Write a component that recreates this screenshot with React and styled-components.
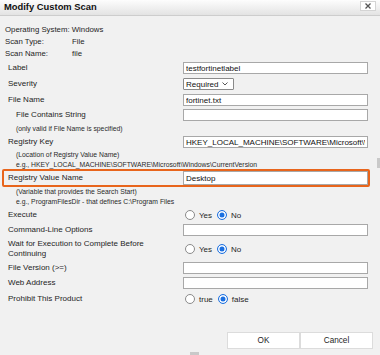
import React from 'react';
import styled, { createGlobalStyle } from 'styled-components';

const GlobalStyle = createGlobalStyle`
  html, body {
    margin: 0;
    padding: 0;
  }
  body {
    width: 380px;
    height: 355px;
    overflow: hidden;
    background: #f1f1f1;
    font-family: 'Liberation Sans', Arial, sans-serif;
  }
`;

function Radio({ checked, children }) {
  return (
    <RadioItem>
      <RadioDot checked={checked} />
      <span>{children}</span>
    </RadioItem>
  );
}

function App() {
  return (
    <>
      <GlobalStyle />
      <Dialog>
        <TitleBar>
          <Title>Modify Custom Scan</Title>
          <CloseButton>
            <svg width='6' height='6' viewBox='0 0 6 6'>
              <path d='M0.5 0.5 L5.5 5.5 M5.5 0.5 L0.5 5.5' stroke='#555' strokeWidth='1.3' />
            </svg>
          </CloseButton>
        </TitleBar>

        <InfoList>
          <InfoRow>Operating System: Windows</InfoRow>
          <InfoRow>
            <InfoKey>Scan Type:</InfoKey>
            <span>File</span>
          </InfoRow>
          <InfoRow>
            <InfoKey>Scan Name:</InfoKey>
            <span>file</span>
          </InfoRow>
        </InfoList>

        <Form>
          <Row mt={3} h={12}>
            <Label>Label</Label>
            <Field><Input readOnly value='testfortinetlabel' /></Field>
          </Row>
          <Row mt={4} h={12}>
            <Label>Severity</Label>
            <Field>
              <Select>
                <span>Required</span>
                <svg width='6' height='4' viewBox='0 0 6 4'>
                  <path d='M0.5 0.5 L3 3 L5.5 0.5' fill='none' stroke='#444' strokeWidth='0.9' />
                </svg>
              </Select>
            </Field>
          </Row>
          <Row mt={4} h={12}>
            <Label>File Name</Label>
            <Field><Input readOnly value='fortinet.txt' /></Field>
          </Row>
          <Row mt={3} h={12}>
            <Label indent={8}>File Contains String</Label>
            <Field><Input readOnly value='' /></Field>
          </Row>
          <Note mt={3}>(only valid if File Name is specified)</Note>
          <Row mt={3} h={12}>
            <Label>Registry Key</Label>
            <Field><Input readOnly value='HKEY_LOCAL_MACHINE\SOFTWARE\Microsoft\Windows\CurrentVersion' /></Field>
          </Row>
          <Note mt={2}>(Location of Registry Value Name)</Note>
          <Note mt={1}>e.g., HKEY_LOCAL_MACHINE\SOFTWARE\Microsoft\Windows\CurrentVersion</Note>
          <Highlight>
            <Label>Registry Value Name</Label>
            <Field><Input readOnly value='Desktop' /></Field>
          </Highlight>
          <Note mt={0}>(Variable that provides the Search Start)</Note>
          <Note mt={1}>e.g., ProgramFilesDir - that defines C:\Program Files</Note>
          <Row mt={3} h={12}>
            <Label>Execute</Label>
            <Field>
              <RadioGroup>
                <Radio>Yes</Radio>
                <Radio checked>No</Radio>
              </RadioGroup>
            </Field>
          </Row>
          <Row mt={3} h={12}>
            <Label>Command-Line Options</Label>
            <Field><Input readOnly value='' /></Field>
          </Row>
          <Row mt={3} h={20}>
            <Label>
              Wait for Execution to Complete Before
              <br />
              Continuing
            </Label>
            <Field>
              <RadioGroup>
                <Radio>Yes</Radio>
                <Radio checked>No</Radio>
              </RadioGroup>
            </Field>
          </Row>
          <Row mt={3} h={12}>
            <Label>File Version (&gt;=)</Label>
            <Field><Input readOnly value='' /></Field>
          </Row>
          <Row mt={3} h={12}>
            <Label>Web Address</Label>
            <Field><Input readOnly value='' /></Field>
          </Row>
          <Row mt={4} h={12}>
            <Label>Prohibit This Product</Label>
            <Field>
              <RadioGroup>
                <Radio>true</Radio>
                <Radio checked>false</Radio>
              </RadioGroup>
            </Field>
          </Row>
        </Form>

        <Footer>
          <Button>OK</Button>
          <Button>Cancel</Button>
        </Footer>

        <ScrollThumb vertical />
        <ScrollThumb />
      </Dialog>
    </>
  );
}

export default App;

const Dialog = styled.div`
  position: relative;
  width: 380px;
  height: 355px;
  background: #f1f1f1;
  color: #1e1e1e;
  overflow: hidden;
`;

const TitleBar = styled.div`
  box-sizing: border-box;
  height: 16px;
  display: flex;
  align-items: flex-start;
  justify-content: space-between;
  padding: 0 4px 0 4px;
  background: linear-gradient(#fdfdfd, #e3e3e3);
  border-bottom: 1px solid #cdcdcd;
`;

const Title = styled.div`
  font-size: 9.4px;
  font-weight: bold;
  line-height: 14px;
  color: #111;
`;

const CloseButton = styled.div`
  box-sizing: border-box;
  margin-top: 1px;
  width: 16px;
  height: 10px;
  background: #fff;
  border: 1px solid #d4d4d4;
  display: flex;
  align-items: center;
  justify-content: center;
`;

const InfoList = styled.div`
  padding: 7px 0 0 5px;
  font-size: 7.8px;
`;

const InfoRow = styled.div`
  display: flex;
  align-items: center;
  height: 12px;
`;

const InfoKey = styled.span`
  width: 67px;
`;

const Form = styled.div`
  display: flex;
  flex-direction: column;
`;

const Row = styled.div`
  box-sizing: border-box;
  display: flex;
  align-items: center;
  height: ${(props) => props.h}px;
  margin-top: ${(props) => props.mt}px;
  padding: 0 12px 0 8px;
`;

const Highlight = styled.div`
  box-sizing: border-box;
  display: flex;
  align-items: center;
  width: 368px;
  height: 18px;
  margin-left: 2px;
  padding-left: 4px;
  border: 2px solid #e8651c;
  border-radius: 2px;
`;

const Label = styled.div`
  box-sizing: border-box;
  flex-shrink: 0;
  width: 175px;
  padding-left: ${(props) => props.indent || 0}px;
  font-size: 8px;
  line-height: 10px;
  color: #1e1e1e;
`;

const Field = styled.div`
  flex: 1;
  display: flex;
  align-items: center;
  height: 100%;
`;

const Input = styled.input`
  box-sizing: border-box;
  width: 100%;
  height: 100%;
  margin: 0;
  padding: 0 2px;
  border: 1px solid #a8a8a8;
  background: #fff;
  font-family: 'Liberation Sans', Arial, sans-serif;
  font-size: 8px;
  color: #111;
  outline: none;
`;

const Select = styled.div`
  box-sizing: border-box;
  width: 51px;
  height: 100%;
  display: flex;
  align-items: center;
  justify-content: space-between;
  padding: 0 5px 0 2px;
  background: #fff;
  border: 1.5px solid #8a8a8a;
  border-radius: 1px;
  font-size: 8px;
  color: #111;
`;

const Note = styled.div`
  height: 9px;
  margin-top: ${(props) => props.mt}px;
  padding-left: 16px;
  font-size: 6.8px;
  line-height: 9px;
  color: #2a2a2a;
  white-space: nowrap;
`;

const RadioGroup = styled.div`
  display: flex;
  align-items: center;
  gap: 5px;
  margin-left: 2px;
`;

const RadioItem = styled.label`
  display: flex;
  align-items: center;
  gap: 4px;
  font-size: 8px;
  color: #1e1e1e;
`;

const RadioDot = styled.span`
  box-sizing: border-box;
  width: 10px;
  height: 10px;
  border-radius: 50%;
  background: #fff;
  border: ${(props) => (props.checked ? '1.5px solid #1a6fe0' : '1px solid #8a8a8a')};
  box-shadow: ${(props) => (props.checked ? 'inset 0 0 0 1.5px #fff, inset 0 0 0 5px #1a6fe0' : 'none')};
`;

const Footer = styled.div`
  display: flex;
  justify-content: flex-end;
  margin-top: 27px;
  padding-right: 7px;
`;

const Button = styled.div`
  box-sizing: border-box;
  width: 73px;
  height: 17px;
  display: flex;
  align-items: center;
  justify-content: center;
  background: #fff;
  border: 1px solid #dcdcdc;
  font-size: 8.2px;
  color: #1e1e1e;
`;

const ScrollThumb = styled.div`
  position: absolute;
  background: #c9c9c9;
  ${(props) =>
    props.vertical
      ? 'right: 0; top: 158px; width: 3px; height: 10px;'
      : 'left: 190px; bottom: 0; width: 9px; height: 3px;'}
`;
